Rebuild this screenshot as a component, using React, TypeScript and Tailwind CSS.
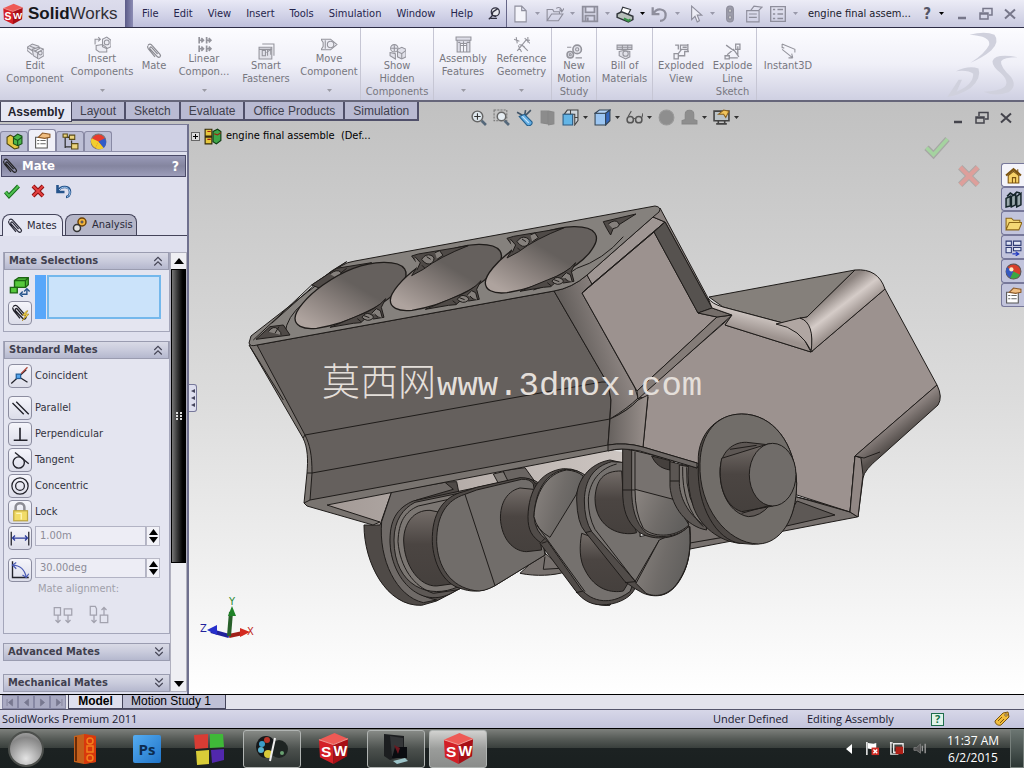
import React from "react";

const INK = "#1f1c1a";

function Ico({ s = 16, children, cls = "" }: { s?: number; children: React.ReactNode; cls?: string }) {
  return (
    <svg width={s} height={s} viewBox="0 0 16 16" fill="none" stroke="currentColor" strokeWidth="1" className={"shrink-0 " + cls} aria-hidden="true">
      {children}
    </svg>
  );
}

const Caret = ({ cls = "text-[#555566]" }: { cls?: string }) => (
  <svg width="5" height="3" viewBox="0 0 5 3" className={"shrink-0 " + cls} aria-hidden="true"><path d="M0 0h5L2.5 3z" fill="currentColor" /></svg>
);

function Clip({ s = 16, cls = "" }: { s?: number; cls?: string }) {
  return (
    <Ico s={s} cls={cls}>
      <path d="M2 2.5C3 .5 5 1 6 2.300l8 9c1.500 2-.8 4-2.500 2.500L4 6c-1-1.300.6-2.600 1.600-1.600l6 6.800M1.800 3c-.5 1 0 2 .6 2.800l6.600 8" strokeWidth="1.200" />
    </Ico>
  );
}

function SwCube({ s }: { s: number }) {
  return (
    <svg width={s} height={s} viewBox="0 0 34 34" className="shrink-0" aria-hidden="true">
      <path d="M2 8 18 1l14 6-15 6z" fill="#ee5a55" />
      <path d="M2 8 17 13v20L3 26z" fill="#d31f26" />
      <path d="M32 7 17 13v20l14-8z" fill="#a80f16" />
      <path d="M2 8l15 5 15-6" fill="none" stroke="#f59a94" strokeWidth="1" />
      <text x="4" y="26" fontSize="16" fontWeight="bold" fontFamily="Liberation Sans, sans-serif" fill="#fff">S</text>
      <text x="17" y="25" fontSize="15" fontWeight="bold" fontFamily="Liberation Sans, sans-serif" fill="#fff">W</text>
    </svg>
  );
}

const box = <path d="M2 6l4-2 4 1v6l-3 3-5-3zM2 6l5 2 3-3M7 8v6" />;
const ribbonIcons: Record<string, React.ReactNode> = {
  edit: <><path d="M0 4l5-3 6 2 1 2-5 3M0 4v3l5 4M0 4l6 4M5 6l6-2 5 2v6l-5 3-5-3zM6 7l4 2 5-3M10 9v6M3 3l5 2" fill="#e4e4ec" /><circle cx="12.500" cy="9.500" r="1.800" /></>,
  insert: <><path d="M1 8V3h5M4 1l2 2-2 2M8 3l4-2 4 3v6l-4 2-4-2zM2 9l6-1 4 3v4H5l-3-2z" fill="#ededf4" /><circle cx="12" cy="6" r="2.300" /></>,
  linear: <path d="M3 1v6M3 4h3M5 2l2 2-2 2M10 1v6M10 4h3M12 2l2 2-2 2M3 9v6M3 12h3M5 10l2 2-2 2M10 9v6M10 12h3M12 10l2 2-2 2" strokeWidth="1.600" />,
  smart: <><path d="M1 4h12v11H1z" fill="#e2e2ea" /><path d="M4 1h11v11M4 7v5h3V7zM9 6v6M8 9l4-3M12 5v6M1 6h12" /></>,
  move: <><path d="M0 3h9l6 5-6 5H0l2-3V6zM4 4v8" fill="#ececf3" /><circle cx="9" cy="8" r="3" /></>,
  show: <><circle cx="5" cy="5" r="3.500" fill="#e6e6ee" /><path d="M1 9l5 1v5l-5-3zM8 6l4-2 4 2v7l-4 2-4-2z" fill="#e0e0e9" /><path d="M8 8l4 2 4-3M12 10v5M5 2v6M2 5h6" /></>,
  features: <path d="M1 1h14v3H1zM2 4v11h12V4M5 15V7h6v8M5 9h6M8 5v10M3 6h2M11 6h3" fill="#dedee8" />,
  geometry: <path d="M1 3l5 2M3 1l1 6M8 8l6 6M4 14l9-11M5 9l3 6M12 4h4M14 1v5M11 2l5 5M6 8l5 2" />,
  motion: <><circle cx="10.500" cy="6" r="4" fill="#e4e4ec" strokeWidth="1.500" /><circle cx="10.500" cy="6" r="1.500" /><circle cx="4" cy="11" r="3" fill="#e4e4ec" strokeWidth="1.500" /><circle cx="4" cy="11" r="1" /><path d="M9 14h6M1 4h4" /></>,
  bill: <><path d="M1 2h14v4H1zM1 4h14M6 2v4M11 2v4M3 8l4-1 6 1v5l-4 2-6-3z" fill="#e0e0e8" /><circle cx="9" cy="10" r="2.500" /></>,
  exploded: <path d="M1 10h4v5H1zM5 12h6V8h4M7 2h7v4H7zM2 2h3v4M9 4h4M8 6l-3 4M14 1v7" strokeWidth="1.200" />,
  line: <path d="M1 12h4v3H1zM3 11l6-5 5 7M2 2l7 5M11 1h4v5h-4zM13 3v8M5 14h8" strokeWidth="1.200" />,
  instant: <path d="M2 1v4M2 1l12 5v3M2 6l10 8M12 14l-1-4M12 14l-4 0M2 4l2 1" />,
};

const ribbon: { id: string; lines: string[]; w: string; drop?: boolean; sep?: boolean }[] = [
  { id: "edit", lines: ["Edit", "Component"], w: "w-[70px]" },
  { id: "insert", lines: ["Insert", "Components"], w: "w-16", drop: true },
  { id: "mate", lines: ["Mate"], w: "w-10" },
  { id: "linear", lines: ["Linear", "Compon..."], w: "w-[60px]", drop: true },
  { id: "smart", lines: ["Smart", "Fasteners"], w: "w-16" },
  { id: "move", lines: ["Move", "Component"], w: "w-[63px]", drop: true, sep: true },
  { id: "show", lines: ["Show", "Hidden", "Components"], w: "w-[73px]", sep: true },
  { id: "features", lines: ["Assembly", "Features"], w: "w-[58px]", drop: true },
  { id: "geometry", lines: ["Reference", "Geometry"], w: "w-[60px]", drop: true, sep: true },
  { id: "motion", lines: ["New", "Motion", "Study"], w: "w-[45px]", sep: true },
  { id: "bill", lines: ["Bill of", "Materials"], w: "w-14", sep: true },
  { id: "exploded", lines: ["Exploded", "View"], w: "w-14" },
  { id: "line", lines: ["Explode", "Line", "Sketch"], w: "w-12", sep: true },
  { id: "instant", lines: ["Instant3D"], w: "w-[62px]" },
];

function WinButtons({ cls }: { cls: string }) {
  return (
    <div className={"flex items-center gap-2 " + cls}>
      <button aria-label="Minimize"><Ico><path d="M4 12h8" strokeWidth="2.500" /></Ico></button>
      <button aria-label="Restore"><Ico><path d="M5 6V2.500h9V9h-3" strokeWidth="1.500" /><path d="M2 7h8v6H2zM2 8h8" strokeWidth="1.500" /></Ico></button>
      <button aria-label="Close"><Ico><path d="M3 3.500l10 9M13 3.500l-10 9" strokeWidth="2" /></Ico></button>
    </div>
  );
}

function TitleBar() {
  return (
    <header className="flex h-7 shrink-0 items-center border-b border-[#2c2c44] bg-linear-to-b from-[#e9e9f6] via-[#d4d5e9] to-[#bfc0dc]">
      <div className="flex h-full w-[125px] items-center gap-1 bg-linear-to-b from-[#dcdcec] to-[#d3d3e6] pl-0.5 font-['Liberation_Sans',sans-serif] text-[17px] text-[#303036]">
        <SwCube s={22} />
        <span><b className="text-[#17171c]">Solid</b>Works</span>
      </div>
      <div className="h-full w-2 bg-linear-to-r from-[#5b5b88] to-[#8c8cb4]" />
      <nav className="flex h-full items-center gap-[15px] pr-[5px] pl-[9px] text-[#25254c]">
        {["File", "Edit", "View", "Insert", "Tools", "Simulation", "Window", "Help"].map((m) => <button key={m}>{m}</button>)}
        <button aria-label="Pin menu"><Ico s={13} cls="text-[#303040]"><circle cx="9" cy="6" r="5" fill="#e8e8ee" strokeWidth="1.500" /><path d="M12 2L6 6l-1 4 5 2M6 10l-5 5M3 14h8" strokeWidth="1.600" /></Ico></button>
      </nav>
      <div className="flex h-full flex-1 items-center border-l border-[#666688] bg-linear-to-b from-[#ececf6] to-[#c9cae0] pl-1 text-[#8e8e9c]">
        <div className="flex items-center gap-1.5">
          <button aria-label="New"><Ico s={18}><path d="M3.500 1h6l4 4v10h-10zM9.500 1v4h4" fill="#f4f4fa" /></Ico></button><Caret cls="text-[#9999aa]" />
          <button aria-label="Open"><Ico s={18}><path d="M1 14V4h5l1 2h5v2M1 14l4-6h10l-4 6zM9 3c3-2 5 0 5 3M12 4l2 2 2-3" /></Ico></button><Caret cls="text-[#9999aa]" />
          <button aria-label="Save"><Ico s={18}><path d="M1.500 1.500h13v13h-13zM4 1.500v5h8v-5M4 14.500v-5h8v5M6 11v3" strokeWidth="1.600" /></Ico></button><Caret cls="text-[#9999aa]" />
          <button aria-label="Print"><Ico s={18} cls="text-[#30353a]"><path d="M4 7l2-5 7 2-2 4" fill="#fff" /><path d="M1 8l4-2 10 4v3l-4 2L1 11z" fill="#b8c0bb" strokeWidth="1.300" /><path d="M7 12l4 2 2-1" stroke="#369045" strokeWidth="2" /></Ico></button><Caret cls="text-black" />
          <button aria-label="Undo"><Ico s={18}><path d="M1.500 2v6h6M2 8c3-6 11-5 11 1 0 3-2 5-5 5" strokeWidth="2" /></Ico></button><Caret cls="text-[#9999aa]" />
          <button aria-label="Select"><Ico s={18}><path d="M5 1v12l3-3 2 5 2-1-2-5h4z" fill="#ededf5" /></Ico></button><Caret cls="text-[#9999aa]" />
          <button aria-label="Rebuild"><Ico s={18}><rect x="5" y="1" width="6" height="14" rx="3" fill="#9c9caa" /><circle cx="8" cy="5" r="1.500" fill="#ccc" /><circle cx="8" cy="11" r="1.500" fill="#ccc" /></Ico></button>
          <button aria-label="File properties"><Ico s={18}><path d="M1.500 5h11v10h-11zM3.500 8h7M3.500 11h7M5 5l3-4 7 1-3 3" /></Ico></button>
          <button aria-label="Options"><Ico s={18}><path d="M1.500 1.500h13v13h-13zM3.500 4h2M7.500 4h5M3.500 8h2M7.500 8h5M3.500 12h2M7.500 12h5" strokeWidth="1.200" /></Ico></button><Caret cls="text-[#9999aa]" />
        </div>
        <span className="ml-2.5 truncate text-[#20202c]">engine final assem...</span>
        <button aria-label="Help" className="mr-2 ml-auto text-[15px] font-bold text-[#555566]">?</button>
        <Caret cls="text-black" />
        <WinButtons cls="mr-1.5 ml-2.5 text-[#77778a]" />
      </div>
    </header>
  );
}

function Ribbon() {
  return (
    <div className="flex h-[74px] shrink-0 border-b-2 border-[#66667a] bg-linear-to-b from-[#fcfcff] via-[#f0f0f8] to-[#cfd0e2] text-[#77777f]">
      {ribbon.map((r) => (
        <button key={r.id} className={"flex shrink-0 flex-col items-center leading-[13px] " + r.w + (r.drop ? " pt-2" : " pt-[15px]") + (r.sep ? " border-r border-[#c6c6d4]" : "")}>
          {r.id === "mate" ? <Clip cls="text-[#8b8b92]" /> : <Ico s={17} cls="-mb-px text-[#94949c]">{ribbonIcons[r.id] || box}</Ico>}
          {r.lines.map((l) => <span key={l} className="whitespace-nowrap">{l}</span>)}
          {r.drop && <span className="mt-[11px]"><Caret cls="text-[#9a9aa4]" /></span>}
        </button>
      ))}
      <svg viewBox="735 90 220 205" className="mt-0.5 mr-1 ml-auto h-[68px] w-[73px] shrink-0" fill="#d0d1dd" aria-hidden="true">
        <path d="M803 104Q850 92 878 104Q895 125 868 152Q845 172 806 189Q850 160 862 135Q868 108 803 104Z" />
        <path d="M762 214Q800 196 830 206Q840 235 806 265Q775 286 736 292L770 240L780 240L764 276Q815 255 814 222Q800 210 762 214Z" />
        <path d="M948 172Q880 160 872 184Q872 200 895 218Q925 245 908 262Q890 275 846 276Q880 292 920 278Q948 260 928 232Q895 200 898 184Q905 172 948 172Z" />
      </svg>
    </div>
  );
}

const hud: { n: string; drop?: boolean; i: React.ReactNode }[] = [
  { n: "Zoom to fit", i: <><circle cx="7" cy="7" r="5" fill="#dfe8ee" stroke="#666" strokeWidth="1.400" /><path d="M11 11l4 4" stroke="#55687a" strokeWidth="2.500" /><path d="M7 4v6M4 7h6" stroke="#333" /></> },
  { n: "Zoom to area", i: <><path d="M1 1h12v10H1z" stroke="#777" strokeDasharray="2 1" /><circle cx="8" cy="7" r="4" fill="#e6edf2" stroke="#666" strokeWidth="1.400" /><path d="M11 11l4 4" stroke="#55687a" strokeWidth="2.500" /></> },
  { n: "Previous view", i: <><path d="M1 3l7 4M14 1L8 7M9 1l-1 6" stroke="#456" strokeWidth="1.500" /><path d="M3 7l5-2 7 7c1 3-3 5-5 3z" fill="#64aee4" stroke="#24608e" /><path d="M6 7l6 6" stroke="#cfe8fa" /></> },
  { n: "Section view", i: <path d="M2 2h6v12l-6-1zM9 2l5 1v11l-5 1z" fill="#8c8c8c" stroke="#888" /> },
  { n: "View orientation", drop: true, i: <><path d="M5 1h10v10l-3 4V5H2z" fill="#cfd6dc" stroke="#444" /><path d="M1 5h9v10H1z" fill="#63b5e6" stroke="#2a5b84" /><path d="M8 1v4M12 8h3" stroke="#444" /></> },
  { n: "Display style", drop: true, i: <><path d="M1 4h10v11H1z" fill="#9cc6f2" stroke="#345" /><path d="M1 4l4-3h10l-4 3z" fill="#b6d6fa" stroke="#345" /><path d="M11 4l4-3v10l-4 4z" fill="#3468c0" stroke="#345" /></> },
  { n: "Hide/Show items", drop: true, i: <><circle cx="4" cy="10" r="3" stroke="#555" strokeWidth="1.400" /><circle cx="12" cy="10" r="3" stroke="#555" strokeWidth="1.400" /><path d="M2 7l3-5M7 9h2M15 8l1-4" stroke="#555" /></> },
  { n: "Edit appearance", i: <circle cx="8" cy="8" r="7" fill="#8e8e8e" stroke="#999" /> },
  { n: "Apply scene", drop: true, i: <path d="M4 10V5c0-5 8-5 8 0v5l3 1v3H1v-3z" fill="#8e8e8e" stroke="#888" /> },
  { n: "View settings", drop: true, i: <><path d="M1 2h14v9H1zM3 14h10M5 11v3M11 11v3" stroke="#444" strokeWidth="1.500" fill="#bcc4c8" /><path d="M5 5l5-4 5 1-3 6-2-3z" fill="#f0c45c" stroke="#8a6220" /></> },
];

function TabStrip() {
  const tabs = ["Layout", "Sketch", "Evaluate", "Office Products", "Simulation"];
  return (
    <div className="flex h-[22px] shrink-0 items-start font-['Liberation_Sans',sans-serif] text-[12px]">
      <button className="h-5 w-[72px] border-r border-b border-l border-[#44445a] bg-[#e6e7f4] font-bold text-[#22222c]">Assembly</button>
      {tabs.map((t) => (
        <button key={t} className="h-[19px] border-r-2 border-b-2 border-[#50506a] bg-[#b9bad2] px-2 whitespace-nowrap text-[#40404c]">{t}</button>
      ))}
      <div className="ml-auto flex items-center gap-1.5 pt-[7px]">
        {hud.map((h) => (
          <button key={h.n} aria-label={h.n} className="flex items-center gap-1"><Ico s={17}>{h.i}</Ico>{h.drop && <Caret cls="text-[#333]" />}</button>
        ))}
      </div>
      <div className="ml-[211px] pt-2"><WinButtons cls="mr-2.5 text-[#44444c]" /></div>
    </div>
  );
}

function GroupHead({ t, open }: { t: string; open?: boolean }) {
  return (
    <button className="flex h-[18px] w-full shrink-0 items-center justify-between border border-[#9a9cb0] bg-linear-to-b from-[#d9dae6] via-[#c9cbdc] to-[#b5b8ce] pr-1 pl-1 font-bold text-[#40404e]">
      <span>{t}</span>
      <Ico s={12} cls="text-[#444454]">{open ? <path d="M3 8l5-5 5 5M3 14l5-5 5 5" strokeWidth="1.500" /> : <path d="M3 2l5 5 5-5M3 8l5 5 5-5" strokeWidth="1.500" />}</Ico>
    </button>
  );
}

const mates: { n: string; cls: string; i: React.ReactNode }[] = [
  { n: "Coincident", cls: "mb-2", i: <><path d="M1 14L13 3M6 8l8 5" strokeWidth="1" /><path d="M9 6l5-5" stroke="#b0483c" /><rect x="5" y="6.500" width="3.500" height="3.500" fill="#55a5ee" stroke="#24609c" /></> },
  { n: "Parallel", cls: "mb-0.5", i: <path d="M2 4l9 9M5 3l10 10" strokeWidth="1.100" /> },
  { n: "Perpendicular", cls: "mb-0.5", i: <path d="M8 3v10M3 13h11" strokeWidth="1.300" /> },
  { n: "Tangent", cls: "mb-0.5", i: <><circle cx="7" cy="10" r="4.500" strokeWidth="1.100" /><path d="M4 2l11 9" strokeWidth="1.100" /></> },
  { n: "Concentric", cls: "mb-0.5", i: <><circle cx="8" cy="8" r="6.500" strokeWidth="1" /><circle cx="8" cy="8" r="3.500" strokeWidth="1" /></> },
  { n: "Lock", cls: "mb-0.5", i: <><path d="M4.500 8V4c0-4 7-4 7 0v4" stroke="#8c8c94" strokeWidth="2" /><rect x="3" y="7" width="11" height="8" fill="#f2dc68" stroke="#c0a840" /><path d="M5 9h4v5" stroke="#fff7bd" /></> },
];

const sq = "flex size-6 shrink-0 items-center justify-center rounded-[4px] border border-[#8c8da0] bg-linear-to-b from-[#f5f5fb] to-[#dcdde9] text-[#22222a]";

function Spin({ label, value, icon }: { label: string; value: string; icon: React.ReactNode }) {
  return (
    <div className="flex items-start gap-[3px]">
      <button aria-label={label + " mate"} className={sq}><Ico s={20}>{icon}</Ico></button>
      <div className="flex h-5 min-w-0 flex-1 pr-[5px]">
        <input aria-label={label} defaultValue={value} className="w-full min-w-0 border border-[#b2b3c4] bg-[#ededf5] px-1 text-[#8c8c98] outline-none" />
        <div className="flex w-3.5 shrink-0 flex-col justify-between border border-[#b8b8c6] bg-[#f2f2f8] py-0.5 text-black">
          <button aria-label={label + " up"} className="flex justify-center"><svg width="9" height="6"><path d="M0 6L4.500 0 9 6z" /></svg></button>
          <button aria-label={label + " down"} className="flex justify-center"><svg width="9" height="6"><path d="M0 0h9L4.500 6z" /></svg></button>
        </div>
      </div>
    </div>
  );
}

const asmIcon = <><path d="M1 4l3-2 4 2v3l4 2v5l-4 1-7-5z" fill="#e5c744" stroke="#4c430f" /><path d="M7 4l4-3 4 2v7l-4 2-4-2z" fill="#4cb64a" stroke="#174f17" /><path d="M7 5l4 2 4-3M11 7v5" stroke="#174f17" /></>;
const propIcon = <><path d="M1.500 5h11v10h-11z" fill="#fff" stroke="#555" /><path d="M3 8h2M6 8h5M3 11h2M6 11h5" stroke="#666" /><path d="M4 5l4-4 7 1v3l-5 1z" fill="#f0bd80" stroke="#8c5a28" /></>;

function LeftPanel() {
  const fm = [
    asmIcon,
    propIcon,
    <><path d="M3 1v13M3 4h5M3 13h6M9 7v4" stroke="#333" strokeWidth="1.200" /><path d="M7 2h5v4H7zM9 10h6v5H9zM1 1h4v3H1z" fill="#ecd47c" stroke="#5c4d18" /></>,
    <><circle cx="8" cy="8" r="7" fill="#e83c2e" stroke="#777" /><path d="M8 8L1.500 5A7 7 0 0 0 5 14z" fill="#f2ce2e" stroke="none" /><path d="M8 8l-3 6a7 7 0 0 0 8 0z" fill="#f2ce2e" stroke="none" /><path d="M8 8l5 6a7 7 0 0 0 1-9z" fill="#305cc8" stroke="none" /></>,
  ];
  return (
    <aside className="flex w-[189px] shrink-0 flex-col border-t border-r-2 border-t-[#7a7b98] border-r-[#6f708e] bg-[#dfe0ee]">
      <div className="flex h-[27px] shrink-0 items-end border-b border-[#8c8da8] bg-[#cfd0e4]">
        {fm.map((i, k) => (
          <button key={k} aria-label={["Feature tree", "Property manager", "Configurations", "Display manager"][k]} className={"flex w-7 items-center justify-center rounded-t-[3px] border border-b-0 border-[#8889a4] " + (k === 1 ? "h-[22px] bg-[#f0f0f8]" : "h-5 bg-[#bdbfd6]")}>
            <Ico s={17}>{i}</Ico>
          </button>
        ))}
      </div>
      <div className="mx-px mt-[3px] flex h-[22px] shrink-0 items-center border border-[#4a4a68] bg-linear-to-b from-[#9a9bb9] via-[#84859f] to-[#9c9dba] text-white">
        <Clip s={16} cls="text-[#222]" />
        <h1 className="ml-1 text-[13px] font-bold">Mate</h1>
        <button aria-label="Help" className="mr-1.5 ml-auto text-[14px] font-bold">?</button>
      </div>
      <div className="flex h-7 shrink-0 items-center gap-2.5 pl-1">
        <button aria-label="OK"><Ico><path d="M1.500 9l3.500 4L14.500 3" stroke="#176b1c" strokeWidth="4" /><path d="M1.500 9l3.500 4L14.500 3" stroke="#4fc150" strokeWidth="2" /></Ico></button>
        <button aria-label="Cancel"><Ico><path d="M3 3l10 10M13 3L3 13" stroke="#8c1010" strokeWidth="4" /><path d="M3 3l10 10M13 3L3 13" stroke="#e44040" strokeWidth="2" /></Ico></button>
        <button aria-label="Undo"><Ico><path d="M1.500 2v7h7M2 8c3-6 12-5 12 1 0 3-2 5-4 5" stroke="#26548c" strokeWidth="2.600" /><path d="M3 7c3-4 10-4 11 2 0 3-1 4-3 5" stroke="#a6cef4" /></Ico></button>
      </div>
      <div className="mt-2 flex h-[23px] shrink-0 items-end gap-0.5 border-b border-[#44445a] pl-0.5 text-[#2a2a38]">
        <button className="-mb-px flex h-[22px] w-[61px] items-center gap-1 rounded-t-lg border border-b-0 border-[#44445a] bg-[#e6e7f3] pl-1 whitespace-nowrap"><Clip />Mates</button>
        <button className="flex h-[21px] w-[72px] items-center gap-1 rounded-t-lg border border-b-0 border-[#44445a] bg-[#b5b6c8] pl-1.5"><Ico><circle cx="10" cy="5" r="4" fill="#f2b43c" stroke="#6b4208" strokeWidth="1.500" /><circle cx="10" cy="5" r="1" fill="#fff" /><circle cx="5" cy="11" r="3.500" fill="#e2e2e2" stroke="#333" strokeWidth="1.500" /></Ico>Analysis</button>
      </div>
      <div className="mt-4 mb-0.5 flex min-h-0 flex-1 pl-[3px]">
        <div className="min-w-0 flex-1 overflow-hidden">
          <section className="mb-[9px] h-20 border-r border-b border-l border-[#a4a6ba] bg-[#e4e5f0]">
            <GroupHead t="Mate Selections" open />
            <div className="flex gap-[3px] pt-[5px] pr-2 pl-1">
              <div className="flex flex-col items-center gap-1">
                <Ico s={22}><path d="M4 4l3-2h7v5l-2 2H4z" fill="#56c83c" stroke="#1d6514" /><path d="M1 9h5v4H1z" fill="#56c83c" stroke="#1d6514" /><path d="M4 4h8l2-2M12 4v5" stroke="#1d6514" /><path d="M9 14h4v-3M11 12l2-2 2 2M10 12l-2 2 2 2" stroke="#26548c" /></Ico>
                <button aria-label="Multiple mate mode" className={sq}><Ico s={18}><path d="M2 2.500C3 .5 5 1 6 2.300l7 8c1.500 2-.8 4-2.500 2.500L4 6c-1-1.300.6-2.600 1.600-1.600l5 5.800M1.800 3c-.5 1 0 2 .6 2.800l5.600 7" strokeWidth="1.200" /><path d="M14 6l-4 4h3l-3 5 6-6h-3l2-3z" fill="#f4d848" stroke="#a88018" strokeWidth=".6" /></Ico></button>
              </div>
              <div className="h-11 w-[11px] bg-[#58a7fa]" />
              <textarea aria-label="Mate selections" className="-ml-0.5 h-11 min-w-0 flex-1 resize-none border-2 border-[#74b8ec] bg-[#cbe3fa] outline-none" />
            </div>
          </section>
          <section className="mb-[9px] h-[293px] border-r border-b border-l border-[#a4a6ba] bg-[#e4e5f0]">
            <GroupHead t="Standard Mates" open />
            <div className="px-1 pt-[5px]">
              {mates.map((m) => (
                <button key={m.n} className={"flex w-full items-center gap-[3px] text-[#333340] " + m.cls}><span className={sq}><Ico s={20}>{m.i}</Ico></span>{m.n}</button>
              ))}
              <div className="mb-2"><Spin label="Distance" value="1.00m" icon={<><path d="M1 3v11M15 3v11" /><path d="M2 8h12M4 6L2 8l2 2M12 6l2 2-2 2" stroke="#2c3c9c" /></>} /></div>
              <Spin label="Angle" value="30.00deg" icon={<><path d="M2 1v13h13" strokeWidth="1.100" /><path d="M2 4c6 0 10 4 11 10M5 2L2 4l3 3M15 11l-2 3-3-2" stroke="#4c5cb4" /></>} />
              <p className="pr-4 text-center leading-[14px] text-[#a0a0aa]">Mate alignment:</p>
              <div className="mt-[9px] flex justify-center gap-4 pr-3 text-[#a2a2ae]">
                <button aria-label="Aligned"><Ico s={20}><path d="M1 2h5v6H1zM9 3h6v5H9zM4 8v6M2 12l2 2 2-2M12 8v6M10 12l2 2 2-2" /></Ico></button>
                <button aria-label="Anti-aligned"><Ico s={20}><path d="M1 1h4l1 2v5H1zM4 8v6M2 12l2 2 2-2M9 8h6v6H9zM12 8V2M10 4l2-2 2 2" /></Ico></button>
              </div>
            </div>
          </section>
          <div className="mb-[13px]"><GroupHead t="Advanced Mates" /></div>
          <GroupHead t="Mechanical Mates" />
        </div>
        <div className="flex w-[17px] shrink-0 flex-col border border-[#b0b0be] bg-[#efeff3]">
          <button aria-label="Scroll up" className="flex h-4 items-center justify-center"><svg width="10" height="6"><path d="M0 6L5 0l5 6z" /></svg></button>
          <div className="flex h-[294px] items-center justify-center border border-black bg-linear-to-r from-[#777] via-[#2c2c2c] to-black">
            <svg width="6" height="8" fill="#ddd"><path d="M0 0h2v2H0zM4 0h2v2H4zM0 3h2v2H0zM4 3h2v2H4zM0 6h2v2H0zM4 6h2v2H4z" /></svg>
          </div>
          <button aria-label="Scroll down" className="mt-auto flex h-3.5 items-center justify-center"><svg width="10" height="6"><path d="M0 0h10L5 6z" /></svg></button>
        </div>
      </div>
    </aside>
  );
}

const BORE = "M165 355C165 310 300 190 430 187C500 186 512 218 485 255C450 310 330 370 230 385C185 390 165 375 165 355Z";

function Pocket({ x, y }: { x: number; y: number }) {
  return (
    <g transform={`translate(${x} ${y})`}>
      <path d="M270 382L352 348Q410 328 437 296L424 322L432 352L400 357L385 348L362 368L340 370Z" fill="#4f4a47" />
      <path d="M366 352q10 -16 24 -10t8 14q-16 12 -32 -4M395 340l14-14 12 6 6 22M372 347l16 6M352 356l12 10M404 342l10 10" fill="#85807c" />
    </g>
  );
}

function TopPocket({ x, y }: { x: number; y: number }) {
  return (
    <g transform={`translate(${x} ${y})`}>
      <path d="M515 168L535 162L685 137Q600 170 550 208L515 227L535 195Z" fill="#4f4a47" />
      <path d="M545 178q12-18 28-12t4 22q-16 12-32-10M585 158l14-6 10 14-18 12M525 170l16 18-10 22M560 170l12 8M546 196l8 8" fill="#85807c" />
    </g>
  );
}

function Model() {
  return (
    <svg viewBox="189 124 835 570" preserveAspectRatio="xMidYMid meet" className="absolute inset-0 size-full" role="img" aria-label="Engine block assembly">
      <defs>
        <linearGradient id="bore" x1="0" y1="1" x2="1" y2="0"><stop offset="0.100" stopColor="#aea39e" /><stop offset="0.350" stopColor="#8b827e" /><stop offset="0.600" stopColor="#65605d" /></linearGradient>
        <linearGradient id="corner" gradientUnits="userSpaceOnUse" x1="575" y1="340" x2="620" y2="325"><stop offset="0" stopColor="#65605d" /><stop offset="1" stopColor="#958c89" /></linearGradient>
        <linearGradient id="corner2" gradientUnits="userSpaceOnUse" x1="608" y1="0" x2="648" y2="0"><stop offset="0" stopColor="#65605d" /><stop offset="1" stopColor="#9a918d" /></linearGradient>
        <linearGradient id="rib" gradientUnits="userSpaceOnUse" x1="831" y1="294" x2="850" y2="319"><stop offset="0" stopColor="#8b827e" /><stop offset="0.500" stopColor="#d5ccc8" /><stop offset="1" stopColor="#9c928e" /></linearGradient>
        <linearGradient id="rib2" gradientUnits="userSpaceOnUse" x1="765" y1="313" x2="760" y2="334"><stop offset="0" stopColor="#d8d0cc" /><stop offset="1" stopColor="#9c928e" /></linearGradient>
        <linearGradient id="cham" gradientUnits="userSpaceOnUse" x1="893" y1="418" x2="906" y2="435"><stop offset="0" stopColor="#968c89" /><stop offset="1" stopColor="#554f4c" /></linearGradient>
        <linearGradient id="pin" x1="0" y1="0" x2="0" y2="1"><stop offset="0" stopColor="#736c68" /><stop offset="0.450" stopColor="#4b4542" /><stop offset="1" stopColor="#45403d" /></linearGradient>
        <linearGradient id="lobe" x1="0" y1="0" x2="1" y2="0.400"><stop offset="0" stopColor="#8c8682" /><stop offset="0.600" stopColor="#706c69" /><stop offset="1" stopColor="#62605e" /></linearGradient>
        <linearGradient id="inner" x1="0" y1="0" x2="1" y2="0"><stop offset="0" stopColor="#a39a96" /><stop offset="1" stopColor="#cfc8c4" /></linearGradient>
      </defs>
      <g stroke={INK} strokeWidth="1" strokeLinejoin="round">
        <path d="M327 505L610 450L640 455L600 500L378 525Z" fill="url(#inner)" stroke="none" />
        <path d="M690 549L857 517L850 510L797 497L700 463L640 500Z" fill="#77716e" />
        <path d="M690 543L782 527L835 515L797 501L780 530" fill="#5d5855" />

        <g transform="translate(290 400) scale(0.3333)" strokeWidth="3">
          <path d="M222 375C222 490 290 620 395 616L440 603L560 540L500 245L465 246L305 275L270 375Z" fill="#4f4a47" />
          <path d="M305 275L465 247L490 268L380 300C300 330 290 420 310 480C340 560 390 590 440 600L400 608C320 590 265 480 275 365Z" fill="#6f6a67" />
          <path d="M640 212L705 203L735 245L650 250Z" fill="#6a6562" />
          <path d="M610 222L640 215L655 245L625 250Z" fill="#7c7773" />
          <path d="M690 520C740 530 790 527 830 515L760 455Z" fill="#77716e" />
          <path d="M765 470L760 508L810 505" fill="none" />
          <path d="M300 420C300 350 330 320 370 303L690 235Q740 232 770 270L765 465L500 570C400 640 300 540 300 420Z" fill="#5d5855" />
          <path d="M312 420C312 360 340 325 375 307L700 240Q760 245 770 290L760 465L505 560C420 600 312 560 312 420Z" fill="#7b7672" />
          <path d="M324 425C326 365 345 335 385 318L545 283M324 425C330 500 370 560 430 580L500 570" fill="none" />
          <path d="M480 343L420 331C370 330 342 370 341 420C342 500 390 560 440 558L500 550Z" fill="url(#pin)" />
          <path d="M427 425C425 340 460 290 520 275L560 262L690 233Q725 232 735 250L765 465L615 557C570 580 540 575 510 565C460 550 430 490 427 425Z" fill="#4e4946" />
          <path d="M440 425C440 345 470 300 525 283L560 270L695 238Q720 236 730 252L765 465L615 557Q580 577 555 572C480 560 443 500 440 425Z" fill="#716d6a" />
          <path d="M525 283L615 557" fill="none" />
          <path d="M730 268L690 264C645 275 628 320 632 365C640 430 680 455 710 455L755 450Z" fill="url(#pin)" />
          <path d="M714 350C716 270 750 215 820 206Q870 205 890 235L985 470L975 590L960 616C920 620 880 600 860 575L755 430C725 410 714 390 714 350Z" fill="#514c49" />
        </g>

        <g transform="translate(540 400) scale(0.3333)" strokeWidth="3">
          <path d="M0 430L105 570C130 605 160 618 200 614C240 610 275 590 285 565L260 530L150 380L30 400Z" fill="#514c49" />
          <path d="M-18 350C-15 270 20 215 80 208Q115 210 140 228L300 500L270 575C235 600 210 603 190 602C160 600 140 585 125 570L20 420Q-15 395 -18 350Z" fill="#75716e" />
          <path d="M-18 350C-15 280 20 220 80 210Q110 212 130 228L108 285L30 412Q-10 390 -18 350Z" fill="url(#lobe)" />
          <path d="M-10 375L135 575M5 430L20 425M108 578L130 573" fill="none" />
          <path d="M125 400C118 440 118 480 135 510C165 570 215 580 250 573L270 540L180 420Z" fill="url(#pin)" />
          <path d="M110 300C108 240 150 190 210 180L300 200L300 420L450 380C455 450 445 500 420 540C390 590 350 595 310 580Q280 565 255 545L135 395Q112 370 110 300Z" fill="#514c49" />
          <path d="M133 300C135 240 160 200 215 185L300 190L300 410L445 375C455 460 445 500 415 545C385 590 345 592 318 580L155 395Q133 360 133 300Z" fill="#75716e" />
          <path d="M145 300C147 245 180 205 230 192M145 300Q145 350 165 388L290 550M135 398L155 393M255 548L285 545L358 420" fill="none" />
          <path d="M165 295C168 240 190 212 245 213L250 290L290 398C250 410 165 390 165 295Z" fill="url(#pin)" />
          <path d="M448 380C455 450 445 500 415 545C385 590 345 592 318 580L288 550L358 420Z" fill="url(#lobe)" />
          <path d="M248 145L400 180L440 300L445 380C400 425 330 420 295 395C260 365 248 330 248 270Z" fill="#504b48" />
          <path d="M275 150L400 180L440 320L445 380C410 415 350 415 320 400C285 370 275 320 275 270Z" fill="#77726f" />
          <path d="M285 268L400 298L447 375C400 418 335 410 310 385Q285 340 285 268Z" fill="url(#lobe)" />
          <path d="M285 155V268M248 270H285" fill="none" />
          <path d="M335 168L390 182V210C360 205 345 190 335 168Z" fill="#45403d" />
          <path d="M390 185L475 205L500 390C440 380 395 320 390 260Z" fill="#5b5653" />
          <path d="M418 195L475 205L500 380C450 350 420 300 418 250Z" fill="#7b7672" />
          <path d="M428 200Q425 320 490 380M440 202Q435 300 490 365M390 243H418" fill="none" />
          <path d="M445 195L480 200L600 430C540 425 480 380 460 320Q440 260 445 195Z" fill="#4c4744" />
        </g>

        <path d="M249 345L303 438C308 448 308 460 307 473L304 503L307 506L373 525L380 522L327 505L612 450Q625 447 640 450L697 468L700 463L643 447L648 397L611 400L554 291Z" fill="#797470" />
        <path d="M257 345L554 291L608 384L611 400L608 445L310 500L312 473C312 455 310 445 305 435Z" fill="#65605d" />
        <path d="M305 435L602 382Q625 381 637 391M312 473L610 419Q628 411 640 399M303 438L305 435M307 473H312M304 503L310 500" fill="none" />

        <path d="M638 398L732 316L725 325L811 352L885 289L937 385L863 449L855 456L850 512L697 463L643 447L648 397Z" fill="#9c928f" />
        <path d="M554 291Q572 288 587 275L592 284L582 293L635 388L638 398Q628 408 610 419L611 400L608 384Z" fill="url(#corner)" />
        <path d="M610 419Q628 411 638 400L648 395L643 447Q625 442 608 445Z" fill="url(#corner2)" />
        <path d="M608 445Q625 442 643 447L697 463V468L640 451Q620 447 608 451Z" fill="#6c6764" />
        <path d="M582 293L654 232L698 313L717 317L637 391Z" fill="#9c928f" />
        <path d="M637 391L717 317L732 315L638 399Z" fill="#847c78" />
        <path d="M587 275L653 217L665 222L592 284Z" fill="#9f9693" />
        <path d="M592 284L665 222L654 232L582 293Z" fill="#958c88" />
        <path d="M653 217L660 208L708 298L712 308L665 222Z" fill="#8a827f" />
        <path d="M654 232L665 222L712 308L698 313Z" fill="#56524f" />
        <path d="M698 313L712 308L732 315L717 317Z" fill="#756e6a" />
        <path d="M709 297L855 270L807 317L783 323L723 307Z" fill="#85807b" />
        <path d="M708 298Q712 304 723 307L783 323Q800 328 811 352L725 325L732 315L712 308Z" fill="url(#rib2)" />
        <path d="M776 324L800 318Q812 320 812 336V352Q800 328 776 324Z" fill="#b0a6a2" />
        <path d="M800 318L807 317L855 270Q878 268 885 289L811 352Q815 323 800 318Z" fill="url(#rib)" />
        <path d="M937 385Q943 397 938 405L880 457Q864 470 863 478L858 517L850 512L855 456L863 449Z" fill="url(#cham)" />
        <path d="M855 456L850 512L858 517L863 475L861 458Z" fill="#918784" />
        <path d="M855 456L864 458L880 452M797 497L850 512" fill="none" />

        <path d="M249 343L251 336L341 266Q347 262 355 261L655 206Q662 207 659 212L653 217L587 275Q572 288 554 291L257 345Q250 347 249 343Z" fill="#85817d" />
        <g transform="translate(240 200) scale(0.3333)" strokeWidth="3">
          <path d="M40 420L120 345L215 255L320 185Q270 212 235 245L95 370M135 400Q140 350 190 310Q290 210 400 190M1150 110Q1090 180 1010 205Q950 250 880 270" fill="none" />
          <path d="M48 418L90 380L130 375L150 405ZM215 255L290 205L395 188Q310 215 240 265Z" fill="#4f4a47" />
          <path d="M85 395q15-20 28-8t10 18M270 222q20-16 32-6t-12 18M105 400l12-20M320 205l-20 16" fill="#85807c" />
          {[[0, 0], [286, -54], [571, -107]].map(([x, y]) => <path key={x} d={BORE} fill="url(#bore)" transform={`translate(${x} ${y})`} strokeWidth="4" />)}
          <Pocket x={0} y={0} /><Pocket x={286} y={-54} /><Pocket x={570} y={-108} />
          <TopPocket x={0} y={0} /><TopPocket x={286} y={-53} />
          <path d="M1090 65L1188 42L1120 85L1112 105L1100 85Z" fill="#4f4a47" />
          <path d="M1105 72q20-16 30-4t-16 18" fill="#85807c" />
          <path d="M30 440L130 600" fill="none" />
        </g>

        <g transform="translate(540 400) scale(0.3333)" strokeWidth="3">
          <path d="M475 170C478 110 520 45 605 42C700 42 765 130 770 250C770 360 720 430 640 433L600 430C530 420 470 320 475 200Z" fill="#4c4744" />
          <path d="M480 190C482 100 530 42 605 42C700 42 765 130 770 250C770 360 720 430 655 432C560 430 475 320 480 190Z" fill="#716d69" />
          <path d="M540 215C540 155 580 125 620 127L690 135L690 315Q660 350 625 350C570 340 540 280 540 215Z" fill="#5d5754" />
          <path d="M545 175L690 130L700 318L605 335C555 320 530 250 545 175Z" fill="url(#pin)" />
          <path d="M570 148L650 136M605 340Q640 330 690 316" fill="none" />
          <ellipse cx="698" cy="224" rx="70" ry="94" fill="#706c69" />
        </g>
      </g>

      <g strokeLinecap="butt">
        <path d="M229 636L211 631" stroke="#22229c" strokeWidth="4" /><path d="M207 630l10-5v10z" fill="#2730cc" />
        <path d="M229 636L243 633" stroke="#a02018" strokeWidth="4" /><path d="M250 632l-10-4v9z" fill="#d42a20" />
        <path d="M229 636L231 612" stroke="#28602a" strokeWidth="4" /><path d="M232 606l-4 10h8z" fill="#1f8228" />
      </g>
      <g fontFamily="'DejaVu Sans Condensed', sans-serif" fontSize="11">
        <text x="200" y="632" fill="#22229c">Z</text><text x="229" y="605" fill="#2c8a30">Y</text><text x="247" y="635" fill="#c02820">X</text>
      </g>
      <text x="322" y="395" fontSize="38" fontWeight="300" fill="#e4dfda" fontFamily="'Noto Sans CJK SC', sans-serif">莫西网</text>
      <text x="437" y="395" fontSize="34" fill="#e4dfda" fontFamily="'Liberation Mono', monospace">www.3dmox.com</text>
    </svg>
  );
}

const pane: { n: string; i: React.ReactNode }[] = [
  { n: "Resources", i: <><path d="M1 8l7-6 7 6" stroke="#7c5410" strokeWidth="2" /><path d="M3 8v7h10V8L8 4z" fill="#f8d268" stroke="#7c5410" /><path d="M7 15v-5h3v5M12 2v4" stroke="#7c5410" /></> },
  { n: "Design library", i: <><path d="M1 7l4-2v9l-4 1zM6 5l4-2v10l-4 2zM11 5l4-3v11l-4 2z" fill="#9aa8ac" stroke="#16262a" strokeWidth="1.400" /><path d="M2 5l3-3 3 2 3-3 3 1" stroke="#16262a" strokeWidth="1.500" /></> },
  { n: "File explorer", i: <path d="M1 14V3h5l2 2h6v2M1 14l3-7h12l-3 7z" fill="#f4d774" stroke="#8a6618" /> },
  { n: "View palette", i: <><path d="M1 2h5v4H1zM8 2h7v4H8zM1 8h5v5H1zM8 8h7v3H8z" fill="#dfe4f4" stroke="#303c74" /><path d="M7 14h5M10 12l3 2-3 2" stroke="#2038c0" /></> },
  { n: "Appearances", i: <><circle cx="8" cy="8" r="7" fill="#d8402c" stroke="#555" /><path d="M8 8L2 4A7 7 0 0 0 5 14z" fill="#3458c0" stroke="none" /><path d="M8 8l-3 6a7 7 0 0 0 9-3z" fill="#3aa844" stroke="none" /><circle cx="6" cy="6" r="2" fill="#ffe9c0" stroke="none" /></> },
  { n: "Custom properties", i: propIcon },
];

function Canvas() {
  return (
    <main className="relative flex min-w-0 flex-1 items-start justify-between">
      <Model />
      <div className="relative z-10 flex items-center gap-1 pt-[3px] pl-0.5 text-black">
        <button aria-label="Expand" className="flex size-[9px] items-center justify-center border border-[#666] bg-[#ddd]"><svg width="5" height="5"><path d="M2 0h1v2h2v1H3v2H2V3H0V2h2z" /></svg></button>
        <Ico s={18}><path d="M1 2h6v6H1zM1 9h6v6H1z" fill="#e8c83c" stroke="#332b08" /><path d="M8 4l4-2 3 2v8l-4 3-3-2z" fill="#3ea648" stroke="#0f3c12" /><path d="M3 4h3M3 11h3M9 6l3 1 3-2" stroke="#a02010" /></Ico>
        <span className="whitespace-pre">engine final assemble  (Def...</span>
      </div>
      <button aria-label="Expand panel" className="absolute top-[260px] left-0 z-10 flex h-7 w-2 items-center justify-center rounded-r-[3px] border border-l-0 border-[#77789a] bg-[#dddeee]"><svg width="4" height="18" fill="#44445c"><path d="M4 0v4L0 2zM4 7v4L0 9zM4 14v4L0 16z" /></svg></button>
      <div className="relative z-10 flex">
        <div className="flex w-[78px] flex-col pt-2">
          <button aria-label="Accept" className="self-start"><Ico s={28}><path d="M2 9l4 4L14 4" stroke="#a7a7a5" strokeWidth="3.500" /><path d="M2 9l4 4L14 4" stroke="#a5d3a0" strokeWidth="2" /></Ico></button>
          <button aria-label="Cancel" className="mt-0.5 mr-[18px] self-end"><Ico s={28}><path d="M3 3l10 10M13 3L3 13" stroke="#aca8a6" strokeWidth="3.500" /><path d="M3 3l10 10M13 3L3 13" stroke="#dd9f9b" strokeWidth="2.400" /></Ico></button>
        </div>
        <div className="mt-[39px] flex w-[23px] flex-col">
          {pane.map((p, i) => (
            <button key={p.n} aria-label={p.n} className={"flex h-6 items-center justify-center rounded-l-[3px] border border-r-0 border-[#77789a] " + (i === 0 ? "bg-[#f4f4fa]" : "bg-[#c2c4dc]")}><Ico s={17}>{p.i}</Ico></button>
          ))}
        </div>
      </div>
    </main>
  );
}

function Footer() {
  return (
    <footer className="shrink-0">
      <div className="flex h-[15px] items-start border-t border-black bg-[#e3e3ec] font-['Liberation_Sans',sans-serif] text-[12px] leading-[13px] text-black">
        <div className="flex pl-0.5">
          {["M11 3L5 8l6 5zM3 3v10", "M11 3L5 8l6 5z", "M5 3l6 5-6 5z", "M5 3l6 5-6 5zM13 3v10"].map((d) => (
            <button key={d} aria-label="Scroll tabs" className="flex h-3.5 w-4 items-center justify-center border border-[#8788a4] bg-[#a9aac2]"><Ico s={11} cls="text-[#77788f]"><path d={d} fill="currentColor" /></Ico></button>
          ))}
        </div>
        <button className="ml-0.5 h-3.5 w-[55px] border-x border-b border-[#44445a] bg-[#dfe0ee] font-bold">Model</button>
        <button className="h-3.5 w-[103px] border-r border-b border-[#44445a] bg-[#bfc0d6] pr-1.5">Motion Study 1</button>
      </div>
      <div className="flex h-[19px] items-center border-t border-[#55556c] bg-linear-to-b from-[#d7d7e8] to-[#c3c4dc] pl-0.5 font-['Open_Sans',sans-serif] text-[11px] leading-[16px] text-[#1a1a30]">
        <span className="whitespace-nowrap">SolidWorks Premium 2011</span>
        <span className="ml-auto w-[94px] whitespace-nowrap">Under Defined</span>
        <span className="w-[124px] whitespace-nowrap">Editing Assembly</span>
        <button aria-label="Quick tips" className="mr-[50px] flex size-[13px] items-center justify-center border border-[#1d6d4c] bg-[#e0f4ea] text-[11px] font-bold text-[#147048]">?</button>
        <button aria-label="Tags" className="mr-3.5"><Ico><path d="M1 10L9 2l5-1 1 5-8 8c-3 1-6-1-6-4z" fill="#f2bd3c" stroke="#7c5610" /><circle cx="12" cy="4" r="1.200" fill="#fff" stroke="#7c5610" /><path d="M4 10l4-4M6 12l4-4" stroke="#7c5610" /></Ico></button>
      </div>
    </footer>
  );
}

const slot = "flex h-10 w-[62px] shrink-0 items-center justify-center";
const lit = "flex h-[38px] w-[58px] shrink-0 items-center justify-center rounded-[3px] border border-[#b0b4b2] ";

function Taskbar() {
  return (
    <div className="flex h-10 shrink-0 items-center border-t border-black bg-[linear-gradient(180deg,#7d807c_0%,#565b57_25%,#3a403d_48%,#1c2222_50%,#1a2020_100%)] text-white">
      <button aria-label="Start" className="mr-0.5 flex w-[52px] justify-center"><span className="size-9 rounded-full border-2 border-[#4c4f4c] bg-[radial-gradient(circle_at_50%_80%,#e4e4e4,#a6a6a6_45%,#868686_70%,#b8b8b8)]" /></button>
      <button aria-label="Archive" className={slot}><svg width="24" height="32" viewBox="0 0 24 32"><path d="M1 3l10-2 12 2v26l-12 2-10-2z" fill="#c4601c" /><path d="M11 1l12 2v26l-12 2z" fill="#d8380c" /><path d="M3 4v24" stroke="#6c2c08" strokeWidth="2" /><g fill="none" stroke="#f2801c" strokeWidth="1.500"><circle cx="17" cy="8" r="3" /><path d="M14 13h6v6h-6z" /><circle cx="17" cy="25" r="3" /></g></svg></button>
      <button aria-label="Photoshop" className={slot}><span className="flex size-7 items-center justify-center rounded-[2px] bg-linear-to-br from-[#55adf2] to-[#1f74c8] font-['Open_Sans',sans-serif] text-[15px] font-bold text-[#0c2c50]">Ps</span></button>
      <button aria-label="Color squares" className={slot}><svg width="32" height="32" viewBox="0 0 32 32"><path d="M1 2l14-1v14L2 16z" fill="#d83c34" /><path d="M17 1h13l1 13-14 1z" fill="#3fb838" /><path d="M3 18l13-1v14l-12 1z" fill="#d8cc38" /><path d="M18 17l13-1v11l-12 3z" fill="#5128ac" /></svg></button>
      <button aria-label="Paint" className={lit + "ml-[3px] mr-px bg-linear-to-b from-[#878a86] via-[#4c514e] to-[#303634]"}><svg width="32" height="28" viewBox="0 0 32 28"><ellipse cx="10" cy="12" rx="10" ry="11" fill="#16181a" /><ellipse cx="23" cy="14" rx="9" ry="9" fill="#1e2422" /><circle cx="6" cy="9" r="3" fill="#3c9cc8" /><circle cx="11" cy="5" r="3" fill="#b83428" /><circle cx="5" cy="15" r="3" fill="#58b0cc" /><circle cx="12" cy="19" r="4" fill="#d8c838" /><circle cx="26" cy="18" r="2" fill="#68a070" /><path d="M19 3l-5 23" stroke="#eee" strokeWidth="2" /></svg></button>
      <button aria-label="SolidWorks launcher" className={slot}><SwCube s={33} /></button>
      <button aria-label="Computer" className={lit + "mr-1 ml-[3px] bg-linear-to-b from-[#878a86] via-[#4c514e] to-[#303634]"}><svg width="28" height="32" viewBox="0 0 28 32"><path d="M2 1l20 2v20l-14 4-6-4z" fill="#1c1e20" /><path d="M8 3l13 2v16l-11 2z" fill="#343638" /><path d="M13 14h12v11H10z" fill="#0a0c10" /><path d="M12 12l6 3-2 6" fill="#6c1820" /><path d="M11 28l12-3 3 3-11 3z" fill="#9cc4c8" /></svg></button>
      <button aria-label="SolidWorks" className={lit + "bg-linear-to-b from-[#d2d2d0] via-[#9a9c9a] to-[#8a8c8a]"}><SwCube s={33} /></button>
      <div className="ml-auto flex items-center gap-[9px]">
        <button aria-label="Show hidden icons" className="mr-1"><svg width="6" height="10"><path d="M6 0v10L0 5z" fill="#fff" /></svg></button>
        <Ico s={15}><path d="M2 1v14" stroke="#fff" strokeWidth="1.500" /><path d="M3 2l6 1 3-1v6L9 9 3 8z" fill="#fff" stroke="none" /><path d="M7 7h8v8H7z" fill="#d02c24" stroke="none" /><path d="M9 9l4 4M13 9l-4 4" stroke="#fff" strokeWidth="1.500" /></Ico>
        <Ico s={15}><path d="M5 3h10v9H5zM2 1v5M1 2h3M2 6v8h8" stroke="#e8e8e8" strokeWidth="1.500" /><path d="M7 6h8v8H7z" fill="#b02018" stroke="none" /></Ico>
        <Ico s={15}><path d="M1 7h3l4-4v10L4 10H1z" fill="#555" stroke="#777" /><path d="M10 5v6M13 3v10" stroke="#999" strokeWidth="1.500" /></Ico>
      </div>
      <time className="ml-3.5 w-[62px] text-center font-['Open_Sans',sans-serif] text-[12px] leading-[17px] whitespace-nowrap">11:37 AM<br />6/2/2015</time>
      <button aria-label="Show desktop" className="ml-1.5 h-full w-3.5 border border-[#77807c] bg-linear-to-b from-[#6c7672] to-[#2c3634]" />
    </div>
  );
}

export default function App() {
  return (
    <div className="flex h-screen min-h-[600px] flex-col overflow-hidden bg-[#dfe0ee] font-['DejaVu_Sans_Condensed','DejaVu_Sans',sans-serif] text-[11px] leading-[14px]">
      <TitleBar />
      <Ribbon />
      <div className="flex min-h-0 flex-1 flex-col bg-linear-to-b from-[#c1c1c1] via-[#dcdcdc] to-[#ffffff]">
        <TabStrip />
        <div className="flex min-h-0 flex-1">
          <LeftPanel />
          <Canvas />
        </div>
      </div>
      <Footer />
      <Taskbar />
    </div>
  );
}
